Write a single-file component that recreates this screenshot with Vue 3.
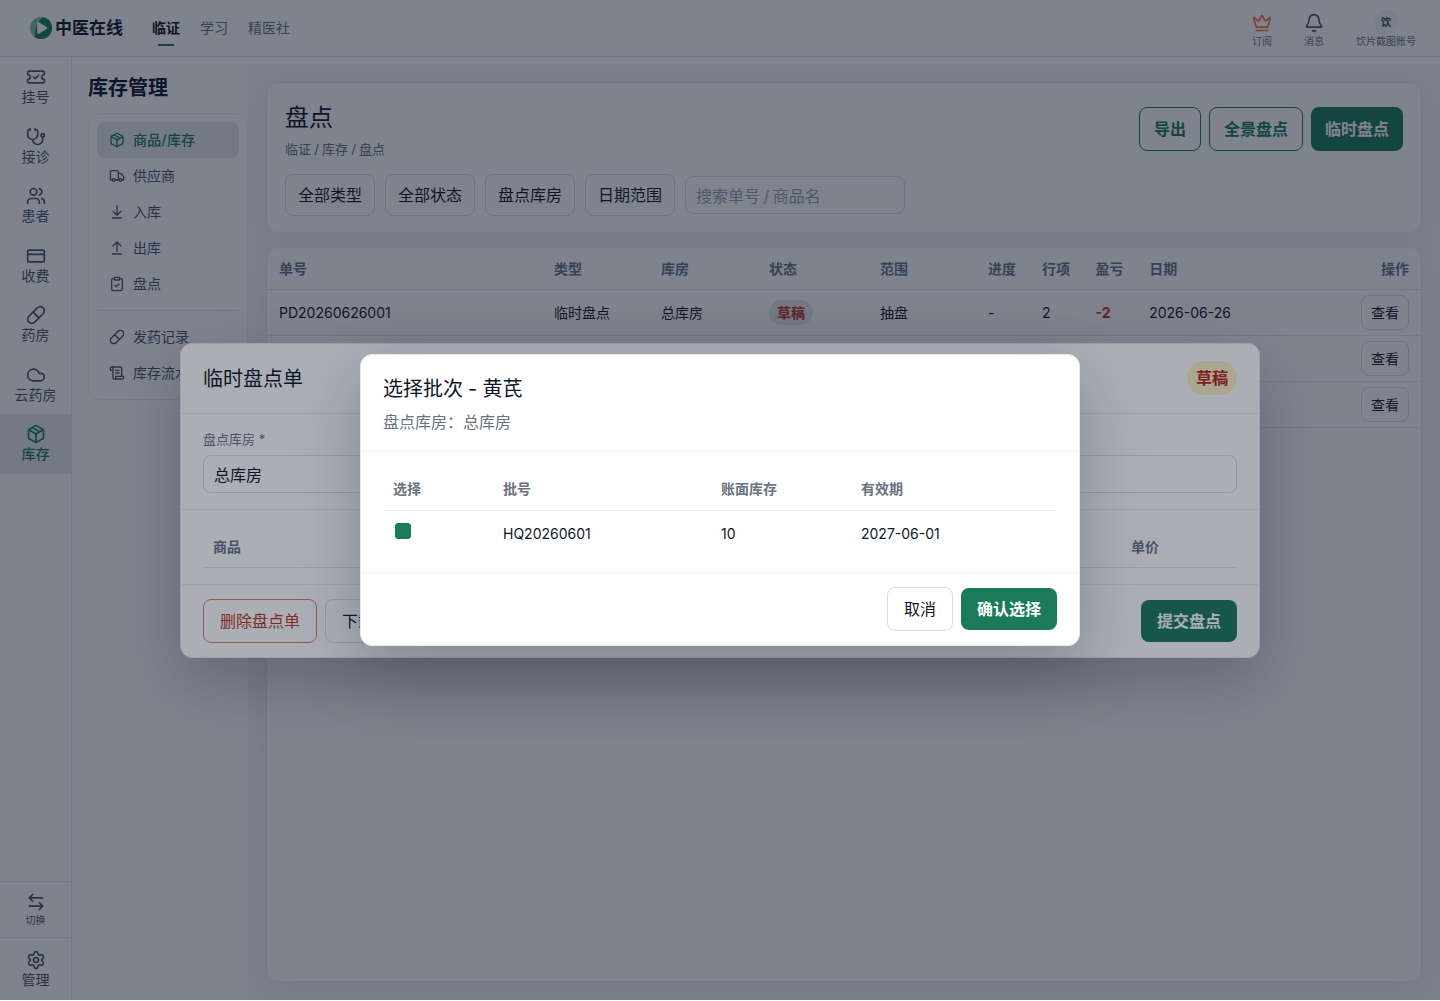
<template>
  <div class="app">
    <header class="topbar">
      <div class="brand">
        <svg class="logo" viewBox="0 0 22 22">
          <circle cx="11" cy="11" r="11" fill="#7fc4a4" />
          <path d="M13 0.2A11 11 0 1 1 5 20.2C4.2 15 6 5 13 0.2z" fill="#12805a" />
          <path d="M7.2 6.2c0-1 .9-1.500 1.800-1l7.600 4.700c.8.500.8 1.600 0 2.100L9 16.700c-.9.500-1.800 0-1.800-1z" fill="#fff" />
        </svg>
        <span>中医在线</span>
      </div>
      <nav class="nav">
        <a v-for="n in navs" :key="n" :class="{ active: n === '临证' }">{{ n }}</a>
      </nav>
      <div class="tools">
        <div class="tool">
          <svg class="icon crown" viewBox="0 0 24 24"><path :d="icons.crown" /></svg>
          <span>订阅</span>
        </div>
        <div class="tool">
          <svg class="icon" viewBox="0 0 24 24"><path :d="icons.bell" /></svg>
          <span>消息</span>
        </div>
        <div class="tool">
          <div class="avatar">饮</div>
          <span>饮片截图账号</span>
        </div>
      </div>
    </header>

    <div class="body">
      <aside class="rail">
        <div
          v-for="item in rail"
          :key="item.label"
          class="rail-item"
          :class="{ active: item.label === '库存' }"
        >
          <svg class="icon" viewBox="0 0 24 24"><path :d="icons[item.icon]" /></svg>
          <span>{{ item.label }}</span>
        </div>
        <div class="rail-switch">
          <svg class="icon" viewBox="0 0 24 24"><path :d="icons.swap" /></svg>
          <span>切换</span>
        </div>
        <div class="rail-item manage">
          <svg class="icon" viewBox="0 0 24 24"><path :d="icons.settings" /></svg>
          <span>管理</span>
        </div>
      </aside>

      <aside class="side">
        <h2>库存管理</h2>
        <div class="menu">
          <template v-for="item in menu" :key="item.label">
            <div v-if="item.divided" class="divider"></div>
            <div class="menu-item" :class="{ active: item.label === '商品/库存' }">
              <svg class="icon small" viewBox="0 0 24 24"><path :d="icons[item.icon]" /></svg>
              <span>{{ item.label }}</span>
            </div>
          </template>
        </div>
      </aside>

      <main class="main">
        <section class="card head">
          <div class="head-row">
            <div>
              <h1>盘点</h1>
              <p class="crumb">临证 / 库存 / 盘点</p>
            </div>
            <div class="actions">
              <button class="btn outline">导出</button>
              <button class="btn outline">全景盘点</button>
              <button class="btn solid">临时盘点</button>
            </div>
          </div>
          <div class="filters">
            <button v-for="f in filters" :key="f" class="filter">{{ f }}</button>
            <input v-model="keyword" placeholder="搜索单号 / 商品名" />
          </div>
        </section>

        <section class="card list">
          <div class="row th">
            <span v-for="c in columns" :key="c">{{ c }}</span>
          </div>
          <div v-for="r in rows" :key="r.no" class="row">
            <span>{{ r.no }}</span>
            <span>{{ r.type }}</span>
            <span>总库房</span>
            <span class="cell-box"><em class="tag">草稿</em></span>
            <span>{{ r.scope }}</span>
            <span>-</span>
            <span>{{ r.lines }}</span>
            <span class="loss">{{ r.diff }}</span>
            <span>{{ r.date }}</span>
            <span class="cell-box"><button class="view">查看</button></span>
          </div>
        </section>
      </main>
    </div>

    <div class="mask sheet-mask">
      <div class="dialog sheet">
        <div class="sheet-head">
          <h3>临时盘点单</h3>
          <em class="badge">草稿</em>
        </div>
        <div class="sheet-form">
          <label>盘点库房 *</label>
          <div class="select">总库房</div>
        </div>
        <div class="sheet-table">
          <div class="sheet-th">
            <span>商品</span>
            <span>单价</span>
          </div>
        </div>
        <div class="dialog-foot">
          <button class="btn plain danger">删除盘点单</button>
          <button class="btn plain">下载模板</button>
          <button class="btn confirm push">提交盘点</button>
        </div>
      </div>
    </div>

    <div class="mask batch-mask">
      <div class="dialog batch">
        <div class="batch-head">
          <h3>选择批次 - 黄芪</h3>
          <p>盘点库房：总库房</p>
        </div>
        <div class="batch-body">
          <div class="batch-row batch-th">
            <span>选择</span>
            <span>批号</span>
            <span>账面库存</span>
            <span>有效期</span>
          </div>
          <div v-for="b in batches" :key="b.no" class="batch-row">
            <span><i class="check" :class="{ on: b.checked }" @click="b.checked = !b.checked"></i></span>
            <span>{{ b.no }}</span>
            <span>{{ b.stock }}</span>
            <span>{{ b.expire }}</span>
          </div>
        </div>
        <div class="dialog-foot end">
          <button class="btn plain">取消</button>
          <button class="btn confirm">确认选择</button>
        </div>
      </div>
    </div>
  </div>
</template>

<script setup>
import { reactive, ref } from 'vue'

const keyword = ref('')
const navs = ['临证', '学习', '精医社']
const filters = ['全部类型', '全部状态', '盘点库房', '日期范围']
const columns = ['单号', '类型', '库房', '状态', '范围', '进度', '行项', '盈亏', '日期', '操作']

const rail = [
  { label: '挂号', icon: 'ticket' },
  { label: '接诊', icon: 'stethoscope' },
  { label: '患者', icon: 'users' },
  { label: '收费', icon: 'card' },
  { label: '药房', icon: 'pill' },
  { label: '云药房', icon: 'cloud' },
  { label: '库存', icon: 'box' }
]

const menu = [
  { label: '商品/库存', icon: 'box' },
  { label: '供应商', icon: 'truck' },
  { label: '入库', icon: 'down' },
  { label: '出库', icon: 'up' },
  { label: '盘点', icon: 'clipboard' },
  { label: '发药记录', icon: 'pill', divided: true },
  { label: '库存流水', icon: 'scroll' }
]

const rows = [
  { no: 'PD20260626001', type: '临时盘点', scope: '抽盘', lines: 2, diff: '-2', date: '2026-06-26' },
  { no: 'PD20260625002', type: '临时盘点', scope: '抽盘', lines: 1, diff: '0', date: '2026-06-25' },
  { no: 'PD20260625001', type: '全景盘点', scope: '全盘', lines: 3, diff: '0', date: '2026-06-25' }
]

const batches = reactive([
  { no: 'HQ20260601', stock: 10, expire: '2027-06-01', checked: true }
])

const icons = {
  crown: 'M11.562 3.266a.5.5 0 0 1 .876 0L15.39 8.87a1 1 0 0 0 1.516.294L21.183 5.5a.5.5 0 0 1 .798.519l-2.834 10.246a1 1 0 0 1-.956.734H5.81a1 1 0 0 1-.957-.734L2.02 6.02a.5.5 0 0 1 .798-.519l4.276 3.664a1 1 0 0 0 1.516-.294zM5 21h14',
  bell: 'M10.268 21a2 2 0 0 0 3.464 0M3.262 15.326A1 1 0 0 0 4 17h16a1 1 0 0 0 .74-1.673C19.41 13.956 18 12.499 18 8A6 6 0 0 0 6 8c0 4.499-1.411 5.956-2.738 7.326',
  ticket: 'M2 9a3 3 0 1 1 0 6v2a2 2 0 0 0 2 2h16a2 2 0 0 0 2-2v-2a3 3 0 1 1 0-6V7a2 2 0 0 0-2-2H4a2 2 0 0 0-2 2ZM9 12l2 2 4-4',
  stethoscope: 'M11 2v2M5 2v2M5 3H4a2 2 0 0 0-2 2v4a6 6 0 0 0 12 0V5a2 2 0 0 0-2-2h-1M8 15a6 6 0 0 0 12 0v-3M18 10a2 2 0 1 0 4 0a2 2 0 1 0-4 0',
  users: 'M16 21v-2a4 4 0 0 0-4-4H6a4 4 0 0 0-4 4v2M16 3.128a4 4 0 0 1 0 7.744M22 21v-2a4 4 0 0 0-3-3.870M5 7a4 4 0 1 0 8 0a4 4 0 1 0-8 0',
  card: 'M4 5h16a2 2 0 0 1 2 2v10a2 2 0 0 1-2 2H4a2 2 0 0 1-2-2V7a2 2 0 0 1 2-2zM2 10h20',
  pill: 'M10.500 20.500l10-10a4.950 4.950 0 1 0-7-7l-10 10a4.950 4.950 0 1 0 7 7ZM8.500 8.500l7 7',
  cloud: 'M17.500 19H9a7 7 0 1 1 6.710-9h1.790a4.500 4.500 0 1 1 0 9Z',
  box: 'M11 21.730a2 2 0 0 0 2 0l7-4A2 2 0 0 0 21 16V8a2 2 0 0 0-1-1.730l-7-4a2 2 0 0 0-2 0l-7 4A2 2 0 0 0 3 8v8a2 2 0 0 0 1 1.730zM12 22V12M3.290 7 12 12 20.710 7M7.500 4.270l9 5.150',
  swap: 'M8 3 4 7l4 4M4 7h16M16 21l4-4-4-4M20 17H4',
  settings: 'M9.671 4.136a2.34 2.34 0 0 1 4.659 0 2.34 2.34 0 0 0 3.319 1.915 2.34 2.34 0 0 1 2.33 4.033 2.34 2.34 0 0 0 0 3.831 2.34 2.34 0 0 1-2.33 4.033 2.34 2.34 0 0 0-3.319 1.915 2.34 2.34 0 0 1-4.659 0 2.34 2.34 0 0 0-3.32-1.915 2.34 2.34 0 0 1-2.33-4.033 2.34 2.34 0 0 0 0-3.831A2.34 2.34 0 0 1 6.35 6.051a2.34 2.34 0 0 0 3.319-1.915M9 12a3 3 0 1 0 6 0a3 3 0 1 0-6 0',
  truck: 'M14 18V6a2 2 0 0 0-2-2H4a2 2 0 0 0-2 2v11a1 1 0 0 0 1 1h2M15 18H9M19 18h2a1 1 0 0 0 1-1v-3.650a1 1 0 0 0-.22-.624l-3.480-4.350A1 1 0 0 0 17.520 8H14M15 18a2 2 0 1 0 4 0a2 2 0 1 0-4 0M5 18a2 2 0 1 0 4 0a2 2 0 1 0-4 0',
  down: 'M12 17V3M6 11l6 6 6-6M19 21H5',
  up: 'M18 9l-6-6-6 6M12 3v14M5 21h14',
  clipboard: 'M9 2h6a1 1 0 0 1 1 1v2a1 1 0 0 1-1 1H9a1 1 0 0 1-1-1V3a1 1 0 0 1 1-1zM16 4h2a2 2 0 0 1 2 2v14a2 2 0 0 1-2 2H6a2 2 0 0 1-2-2V6a2 2 0 0 1 2-2h2M9 14l2 2 4-4',
  scroll: 'M15 12h-5M15 8h-5M19 17V5a2 2 0 0 0-2-2H4M8 21h12a2 2 0 0 0 2-2v-1a1 1 0 0 0-1-1H11a1 1 0 0 0-1 1v1a2 2 0 1 1-4 0V5a2 2 0 1 0-4 0v2a1 1 0 0 0 1 1h3'
}
</script>

<style>
body {
  margin: 0;
  background: #ffffff;
}
</style>

<style scoped>
.app {
  position: relative;
  height: 1000px;
  display: flex;
  flex-direction: column;
  font-family: Inter, "Noto Sans CJK SC", sans-serif;
  font-size: 16px;
  line-height: 1.6;
  color: #0f172a;
  background: #ffffff;
}

.app * {
  box-sizing: border-box;
}

h1,
h2,
h3,
p {
  margin: 0;
  font-weight: 400;
}

em,
i {
  font-style: normal;
}

button,
input {
  font: inherit;
  color: inherit;
}

.icon {
  width: 20px;
  height: 20px;
  flex: none;
  fill: none;
  stroke: currentColor;
  stroke-width: 2;
  stroke-linecap: round;
  stroke-linejoin: round;
}

.icon.small {
  width: 16px;
  height: 16px;
}

.topbar {
  height: 57px;
  flex: none;
  display: flex;
  align-items: center;
  padding: 0 24px 0 30px;
  border-bottom: 1px solid #e5e8ee;
}

.brand {
  display: flex;
  align-items: center;
  gap: 3px;
  width: 122px;
  font-size: 17px;
  font-weight: 700;
  white-space: nowrap;
}

.brand span {
  padding-top: 2px;
}

.logo {
  width: 22px;
  height: 22px;
}

.nav {
  display: flex;
  gap: 20px;
  font-size: 14px;
  color: #64748b;
}

.nav a {
  height: 36px;
  line-height: 36px;
  border-bottom: 2px solid transparent;
}

.nav a.active {
  font-weight: 700;
  color: #0f172a;
  background: linear-gradient(#1a7a5a, #1a7a5a) center bottom / 16px 2px no-repeat border-box;
}

.tools {
  margin-left: auto;
  padding-top: 1px;
  display: flex;
  gap: 32px;
  font-size: 10px;
  line-height: 14px;
  color: #64748b;
}

.tool {
  display: flex;
  flex-direction: column;
  align-items: center;
  justify-content: flex-end;
}

.tool .icon {
  color: #475569;
  margin-bottom: 1px;
}

.tool .crown {
  color: #ff7038;
}

.avatar {
  width: 24px;
  height: 24px;
  border-radius: 50%;
  background: #f1f5f9;
  color: #334155;
  font-weight: 700;
  line-height: 24px;
  text-align: center;
}

.body {
  flex: 1;
  min-height: 0;
  display: flex;
}

.rail {
  width: 72px;
  flex: none;
  height: calc(100% + 1px);
  display: flex;
  flex-direction: column;
  border-right: 1px solid #e5e8ee;
  color: #475569;
}

.rail-item {
  height: 59.5px;
  flex: none;
  padding-top: 10px;
  display: flex;
  flex-direction: column;
  align-items: center;
  font-size: 14px;
  line-height: 19.6px;
}

.rail-item.active {
  background: #e6ecee;
  color: #1a7a5a;
  font-weight: 500;
}

.rail-switch {
  margin-top: auto;
  height: 57px;
  padding-top: 10px;
  display: flex;
  flex-direction: column;
  align-items: center;
  border-top: 1px solid #e5e8ee;
  border-bottom: 1px solid #e5e8ee;
  font-size: 10px;
  line-height: 17px;
}

.manage {
  height: 63px;
  padding-top: 12px;
}

.side {
  width: 176px;
  flex: none;
  padding: 15px 0 0 16px;
}

.side h2 {
  font-size: 20px;
  line-height: 32px;
  font-weight: 700;
}

.menu {
  margin-top: 9px;
  padding: 8px;
  border: 1px solid #eceff3;
  border-radius: 12px;
}

.menu-item {
  height: 36px;
  padding: 0 12px;
  display: flex;
  align-items: center;
  gap: 8px;
  border-radius: 8px;
  font-size: 14px;
  color: #475569;
}

.menu-item.active {
  background: #e6ecee;
  color: #1a7a5a;
  font-weight: 500;
  letter-spacing: 0.3px;
}

.divider {
  height: 1px;
  margin: 8px 0;
  background: #e5e8ee;
}

.main {
  flex: 1;
  margin-top: 7px;
  padding: 18px;
  display: flex;
  flex-direction: column;
  gap: 14px;
  background: #f6f7fa;
}

.card {
  background: #ffffff;
  border: 1px solid #e8ebf0;
  border-radius: 12px;
  box-shadow: 0 8px 24px rgba(15, 23, 42, 0.06);
}

.head {
  height: 151px;
  padding: 16px 18px 0;
}

.head-row {
  display: flex;
  justify-content: space-between;
}

.head h1 {
  font-size: 24px;
  line-height: 38px;
}

.crumb {
  margin-top: 2px;
  font-size: 13px;
  line-height: 21px;
  word-spacing: -0.5px;
  color: #64748b;
}

.actions {
  display: flex;
  gap: 8px;
  padding-top: 8px;
}

.btn {
  height: 44px;
  border-radius: 8px;
  padding: 2px 14px 0;
  font-weight: 700;
  background: transparent;
  white-space: nowrap;
}

.outline {
  border: 1px solid #1a7a5a;
  color: #1a7a5a;
}

.solid,
.confirm {
  border: none;
  background: #1a7a5a;
  color: #ffffff;
}

.filters {
  margin-top: 14px;
  display: flex;
  align-items: center;
  gap: 10px;
}

.filter {
  height: 42px;
  padding: 2px 12px 0;
  border: 1px solid #d7dce8;
  border-radius: 8px;
  background: transparent;
}

.filters input {
  width: 220px;
  height: 38px;
  padding: 2px 10px 0;
  border: 1px solid #d7dce8;
  border-radius: 8px;
  background: transparent;
  word-spacing: -1px;
}

.filters input::placeholder {
  color: #94a3b8;
}

.list {
  flex: 1;
}

.row {
  height: 46px;
  display: grid;
  grid-template-columns: 275px 107px 108px 111px 108px 54px 53.6px 53.6px 1fr 110px;
  align-items: center;
  border-bottom: 1px solid #e8ebf0;
  font-size: 14px;
}

.row > span {
  padding: 2px 12px 0;
}

.row > .cell-box {
  padding-top: 0;
}

.row > span:last-child {
  text-align: right;
}

.th {
  height: 42px;
  font-weight: 700;
  color: #64748b;
  border-bottom-color: #e2e5eb;
}

.tag {
  display: inline-block;
  padding: 0 8px;
  height: 25px;
  line-height: 25px;
  border-radius: 13px;
  background: #ebe9e8;
  color: #c2361f;
  font-weight: 700;
  vertical-align: middle;
}

.row > .loss {
  color: #c2361f;
  font-weight: 700;
}

.view {
  height: 35px;
  padding: 2px 9px 0;
  border: 1px solid #d7dce8;
  border-radius: 8px;
  background: transparent;
  vertical-align: middle;
}

.mask {
  position: absolute;
  inset: 0;
  display: flex;
  align-items: center;
  justify-content: center;
}

.sheet-mask {
  background: rgba(15, 23, 42, 0.28);
}

.batch-mask {
  background: rgba(15, 23, 42, 0.35);
}

.dialog {
  background: #ffffff;
  border: 1px solid #e5e8ee;
  border-radius: 12px;
  box-shadow: 0 24px 64px rgba(15, 23, 42, 0.25);
}

.dialog h3 {
  font-size: 20px;
}

.sheet {
  width: 1080px;
}

.sheet-head {
  height: 70px;
  padding: 0 22px;
  display: flex;
  align-items: center;
  justify-content: space-between;
  border-bottom: 1px solid #eceff3;
}

.sheet-head h3 {
  padding-top: 2px;
}

.badge {
  height: 34px;
  line-height: 34px;
  padding: 0 9px;
  border-radius: 17px;
  background: #fef3c7;
  color: #b42318;
  font-weight: 700;
}

.sheet-form {
  height: 96px;
  padding: 15px 22px 0;
  border-bottom: 1px solid #eceff3;
}

.sheet-form label {
  display: block;
  margin-bottom: 6px;
  font-size: 13px;
  line-height: 20.8px;
  color: #64748b;
}

.select {
  height: 38px;
  line-height: 26px;
  padding: 6px 10px 0;
  border: 1px solid #d7dce8;
  border-radius: 8px;
}

.sheet-table {
  padding: 16px 22px;
}

.sheet-th {
  height: 42px;
  padding-top: 2px;
  display: grid;
  grid-template-columns: 1fr 116px;
  align-items: center;
  border-bottom: 1px solid #e2e5eb;
  font-size: 14px;
  font-weight: 700;
  color: #64748b;
}

.sheet-th span {
  padding: 0 10px;
}

.dialog-foot {
  height: 73px;
  padding: 0 22px;
  display: flex;
  align-items: center;
  gap: 8px;
  border-top: 1px solid #eceff3;
}

.dialog-foot.end {
  justify-content: flex-end;
}

.plain {
  padding: 2px 16px 0;
  border: 1px solid #d7dce8;
  font-weight: 400;
}

.danger {
  border-color: #e07a68;
  color: #b93a1c;
}

.confirm {
  height: 42px;
  padding: 2px 16px 0;
}

.push {
  margin-left: auto;
}

.batch {
  width: 720px;
  margin-top: -1px;
}

.batch-head {
  height: 97px;
  padding: 18px 22px 0;
  border-bottom: 1px solid #f1f2f4;
}

.batch-head h3 {
  line-height: 32px;
  word-spacing: -0.5px;
}

.batch-head p {
  margin-top: 4px;
  line-height: 26px;
  color: #6b7280;
}

.batch-body {
  padding: 16px 22px;
}

.batch-row {
  height: 45px;
  padding-top: 2px;
  display: grid;
  grid-template-columns: 110px 218px 140px 1fr;
  align-items: center;
  font-size: 14px;
}

.batch-row span {
  padding: 0 10px;
}

.batch-th {
  height: 43px;
  font-weight: 700;
  color: #6b7280;
  border-bottom: 1px solid #eceef0;
}

.check {
  display: block;
  width: 16px;
  height: 16px;
  margin: 0 0 7px 2px;
  border: 1px solid #cbd5e1;
  border-radius: 3px;
}

.check.on {
  border-color: #1a7a5a;
  background: #1a7a5a;
}

.batch .dialog-foot {
  border-top-color: #f1f2f4;
}
</style>
